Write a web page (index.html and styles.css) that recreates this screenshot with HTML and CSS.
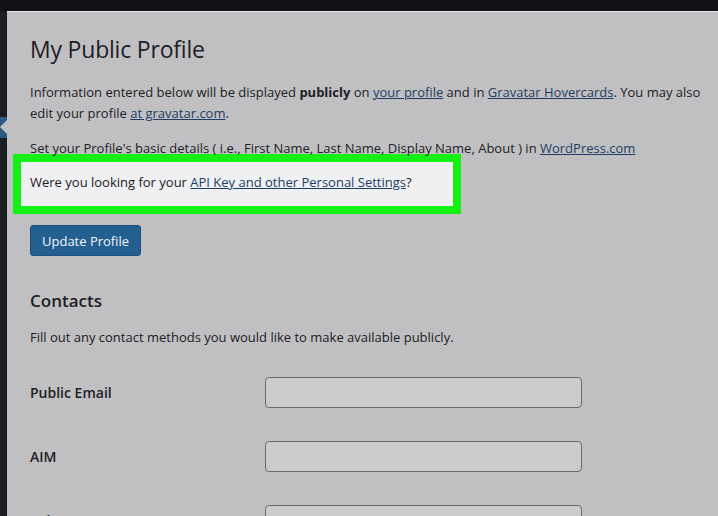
FILE: index.html
```html
<!DOCTYPE html>
<html lang="en">
<head>
<meta charset="UTF-8">
<meta name="viewport" content="width=device-width, initial-scale=1.0">
<title>My Public Profile</title>
<link rel="stylesheet" href="styles.css">
</head>
<body>
  <div class="topbar"></div>
  <div class="layout">
    <div class="sidebar">
      <div class="side-current"><span class="notch"></span></div>
    </div>
    <div class="panel">
      <h1>My Public Profile</h1>
      <p class="intro">Information entered below will be displayed <b>publicly</b> on <a href="#">your profile</a> and in <a href="#">Gravatar Hovercards</a>. You may also edit your profile <a href="#">at gravatar.com</a>.</p>
      <p class="basic">Set your Profile's basic details ( i.e., First Name, Last Name, Display Name, About ) in <a href="#">WordPress.com</a></p>

      <div class="highlight">
        <div class="notice">Were you looking for your <a href="#">API Key and other Personal Settings</a>?</div>
      </div>

      <button class="btn">Update Profile</button>

      <h2>Contacts</h2>
      <p class="hint">Fill out any contact methods you would like to make available publicly.</p>

      <div class="fields">
        <label for="email">Public Email</label>
        <input id="email" type="text">
        <label for="aim">AIM</label>
        <input id="aim" type="text">
        <label for="yim">Yahoo IM</label>
        <input id="yim" type="text">
      </div>
    </div>
  </div>
</body>
</html>
```

FILE: styles.css
```css
  body {
    margin: 0;
    padding: 0;
    background-color: #111316;
    font-family: "Open Sans", "Noto Sans", sans-serif;
    color: #1d2024;
    height: 516px;
    overflow: hidden;
  }

  .topbar {
    height: 11px;
    background-color: #101215;
  }

  .layout {
    display: flex;
    height: 505px;
  }

  .sidebar {
    width: 7px;
    background-color: #1a1d21;
    padding-top: 106px;
  }

  .side-current {
    position: relative;
    height: 21px;
    background-color: #2a5a84;
  }

  /* the little arrow pointing at the current page */
  .notch {
    position: absolute;
    right: 0;
    top: 3px;
    border-top: 7px solid transparent;
    border-bottom: 7px solid transparent;
    border-right: 7px solid #c0c0c2;
  }

  .panel {
    flex: 1;
    background-color: #c0c0c2;
    border-top: 1px solid #e4e4e6;
    padding: 0 0 0 23px;
  }

  h1 {
    font-size: 23px;
    font-weight: 400;
    margin: 23px 0 0 0;
    line-height: 28px;
    letter-spacing: -0.2px;
  }

  p {
    font-size: 13px;
    line-height: 21px;
    margin: 0;
  }

  a {
    color: #1f3d63;
  }

  .intro {
    margin-top: 19px;
    padding-right: 10px;
  }

  .basic {
    margin-top: 14px;
  }

  .highlight {
    width: 432px;
    margin: -5px 0 0 -17px;
    border: 8px solid #14f014;
  }

  .notice {
    background-color: #eef0f2;
    font-size: 13px;
    line-height: 41px;
    padding: 0 0 3px 9px;
  }

  .btn {
    display: block;
    margin-top: 11px;
    height: 31px;
    padding: 0 11px;
    font-family: inherit;
    font-size: 13px;
    color: #f2f4f6;
    background-color: #245f92;
    border: 1px solid #1e4f7a;
    border-radius: 3px;
  }

  h2 {
    font-size: 17px;
    font-weight: 600;
    margin: 34px 0 0 0;
    line-height: 22px;
  }

  .hint {
    margin-top: 15px;
  }

  .fields {
    display: grid;
    grid-template-columns: 235px 317px;
    grid-auto-rows: 31px;
    row-gap: 33px;
    align-items: center;
    margin-top: 29px;
  }

  label {
    font-size: 14px;
    font-weight: 600;
  }

  input {
    height: 31px;
    box-sizing: border-box;
    background-color: #cbcbcc;
    border: 1px solid #6b6b6d;
    border-radius: 4px;
  }
```
